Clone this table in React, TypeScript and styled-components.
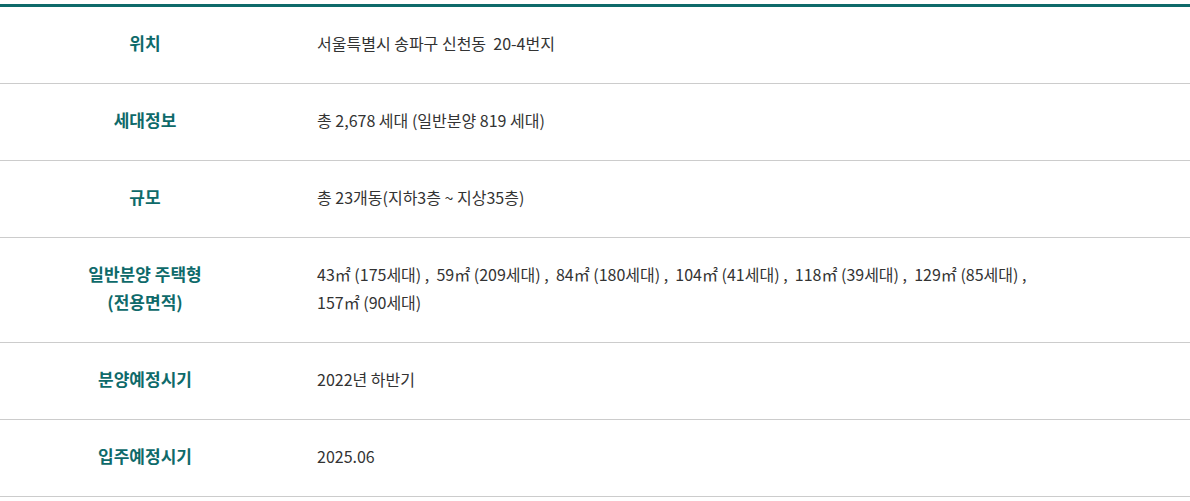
import styled, { createGlobalStyle } from 'styled-components';

const GlobalStyle = createGlobalStyle`
  html, body {
    margin: 0;
    padding: 0;
    background: #fff;
  }
  body {
    font-family: "Noto Sans CJK KR", "Noto Sans", sans-serif;
  }
`;

type Row = { label: string[]; value: string[] };

const rows: Row[] = [
  { label: ['위치'], value: ['서울특별시 송파구 신천동  20-4번지'] },
  { label: ['세대정보'], value: ['총 2,678 세대 (일반분양 819 세대)'] },
  { label: ['규모'], value: ['총 23개동(지하3층 ~ 지상35층)'] },
  {
    label: ['일반분양 주택형', '(전용면적)'],
    value: [
      '43㎡ (175세대) ,  59㎡ (209세대) ,  84㎡ (180세대) ,  104㎡ (41세대) ,  118㎡ (39세대) ,  129㎡ (85세대) ,',
      '157㎡ (90세대)',
    ],
  },
  { label: ['분양예정시기'], value: ['2022년 하반기'] },
  { label: ['입주예정시기'], value: ['2025.06'] },
];

export default function App() {
  return (
    <Page>
      <GlobalStyle />
      <InfoTable>
        {rows.map((row, i) => (
          <InfoRow key={i}>
            <Label>
              {row.label.map((l, j) => (
                <Line key={j}>{l}</Line>
              ))}
            </Label>
            <Value>
              {row.value.map((v, j) => (
                <Line key={j}>{v}</Line>
              ))}
            </Value>
          </InfoRow>
        ))}
      </InfoTable>
    </Page>
  );
}

const Page = styled.div`
  width: 1190px;
  padding-top: 4px;
`;

const InfoTable = styled.div`
  border-top: 3px solid #0e6a6a;
  display: flex;
  flex-direction: column;
`;

const InfoRow = styled.div`
  display: grid;
  grid-template-columns: 290px 1fr;
  border-bottom: 1px solid #cccccc;
  padding: 22px 0 26px;
  line-height: 28px;
`;

const Label = styled.div`
  text-align: center;
  color: #0e6a6a;
  font-size: 17px;
  font-weight: 700;
`;

const Value = styled.div`
  padding-left: 27px;
  padding-right: 60px;
  color: #333333;
  font-size: 16px;
  font-weight: 400;
  white-space: pre-wrap;
`;

const Line = styled.div``;
